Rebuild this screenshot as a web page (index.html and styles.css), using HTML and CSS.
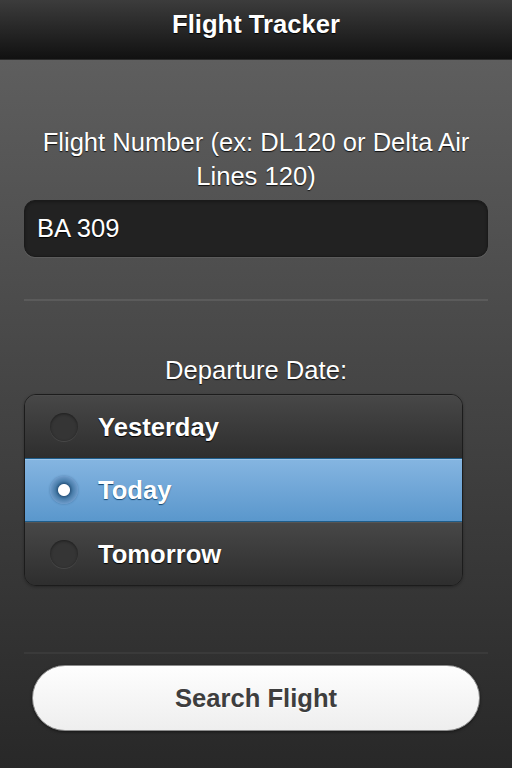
FILE: index.html
```html
<!DOCTYPE html>
<html lang="en">
<head>
<meta charset="utf-8">
<title>Flight Tracker</title>
<link rel="stylesheet" href="styles.css">
</head>
<body>
<header class="bar">
  <h1 class="title">Flight Tracker</h1>
</header>
<main class="content">
  <div class="field field-first">
    <label class="label" for="flight">Flight Number (ex: DL120 or Delta Air Lines 120)</label>
    <input class="text-input" id="flight" type="text" value="BA 309">
  </div>
  <div class="field field-second">
    <div class="label">Departure Date:</div>
    <div class="radio-group">
      <label class="radio-row">
        <span class="radio-icon"></span>
        <span class="radio-text">Yesterday</span>
      </label>
      <label class="radio-row is-active">
        <span class="radio-icon is-checked"></span>
        <span class="radio-text">Today</span>
      </label>
      <label class="radio-row">
        <span class="radio-icon"></span>
        <span class="radio-text">Tomorrow</span>
      </label>
    </div>
  </div>
  <button class="button" type="button">Search Flight</button>
</main>
</body>
</html>
```
FILE: styles.css
```css
html, body {
  margin: 0;
  padding: 0;
}
body {
  width: 512px;
  height: 768px;
  overflow: hidden;
  font-family: "Liberation Sans", Arial, sans-serif;
  background: #292929;
  color: #fff;
}
.bar {
  height: 60px;
  box-sizing: border-box;
  background: linear-gradient(#3c3c3c, #111);
  border-bottom: 1px solid #2b2b2b;
  padding-top: 12px;
}
.title {
  margin: 0;
  text-align: center;
  font-size: 25.6px;
  line-height: 25.6px;
  font-weight: bold;
  color: #fff;
  text-shadow: 0 1px 1px #000;
}
.content {
  height: 708px;
  box-sizing: border-box;
  padding: 0 24px;
  background: linear-gradient(#5e5e5e, #282828);
  display: flex;
  flex-direction: column;
}
.field {
  border-bottom: 2px solid #5a5a5a;
  display: flex;
  flex-direction: column;
}
.field-first {
  padding: 65px 0 42px;
  border-bottom-color: #5b5b5b;
}
.field-second {
  padding: 52px 0 66px;
  border-bottom-color: #3a3a3a;
}
.label {
  display: block;
  text-align: center;
  font-size: 25.6px;
  line-height: 34px;
  color: #fff;
  text-shadow: 0 1px 1px #111;
  margin-bottom: 7px;
}
.text-input {
  height: 57px;
  box-sizing: border-box;
  width: 100%;
  margin: 0;
  padding: 0 12px;
  border: 1px solid #1a1a1a;
  border-radius: 11px;
  background: #222;
  color: #fff;
  font-family: inherit;
  font-size: 25.6px;
  text-shadow: 0 1px 1px #000;
  box-shadow: inset 0 1px 3px rgba(0,0,0,.3), 0 1px 0 rgba(255,255,255,.08);
  outline: none;
}
.radio-group {
  width: 439px;
  box-sizing: border-box;
  border: 1px solid #1c1c1c;
  border-radius: 12px;
  overflow: hidden;
  box-shadow: 0 1px 3px rgba(0,0,0,.3);
}
.radio-row {
  height: 63px;
  box-sizing: border-box;
  display: flex;
  align-items: center;
  padding-left: 25px;
  gap: 20px;
  background: linear-gradient(#474747, #2e2e2e);
  border-top: 1px solid #555;
}
.radio-row:first-child {
  border-top-color: #4c4c4c;
}
.radio-row.is-active {
  height: 64px;
  background: linear-gradient(#85b5e1, #5a97cc);
  border-top: 1px solid #1f5d8a;
  border-bottom: 1px solid #1f5d8a;
  box-shadow: inset 0 1px 0 #9cc6ec;
}
.radio-icon {
  width: 28px;
  height: 28px;
  border-radius: 50%;
  background: #353535;
  box-shadow: inset 0 1px 3px rgba(0,0,0,.45), 0 1px 0 rgba(255,255,255,.09);
  flex: none;
}
.radio-icon.is-checked {
  background: radial-gradient(circle, #fff 0, #fff 5.5px, #2f5d87 6.5px, #4a7eab 9px, #6f9ccb 14px);
  box-shadow: 0 0 2px rgba(30,70,110,.5);
}
.radio-text {
  font-size: 25.6px;
  font-weight: bold;
  color: #fff;
  text-shadow: 0 1px 1px #000;
}
.radio-row.is-active .radio-text {
  text-shadow: 0 1px 1px #14466f;
}
.button {
  margin: 11px 8px 0;
  height: 66px;
  box-sizing: border-box;
  border: 1px solid #8c8c8c;
  border-radius: 33px;
  background: linear-gradient(#fefefe, #eeeeee);
  box-shadow: 0 1px 3px rgba(0,0,0,.5);
  font-family: inherit;
  font-size: 25.6px;
  font-weight: bold;
  color: #3e3e3e;
  text-shadow: 0 1px 0 #fff;
  padding: 0;
}
```
